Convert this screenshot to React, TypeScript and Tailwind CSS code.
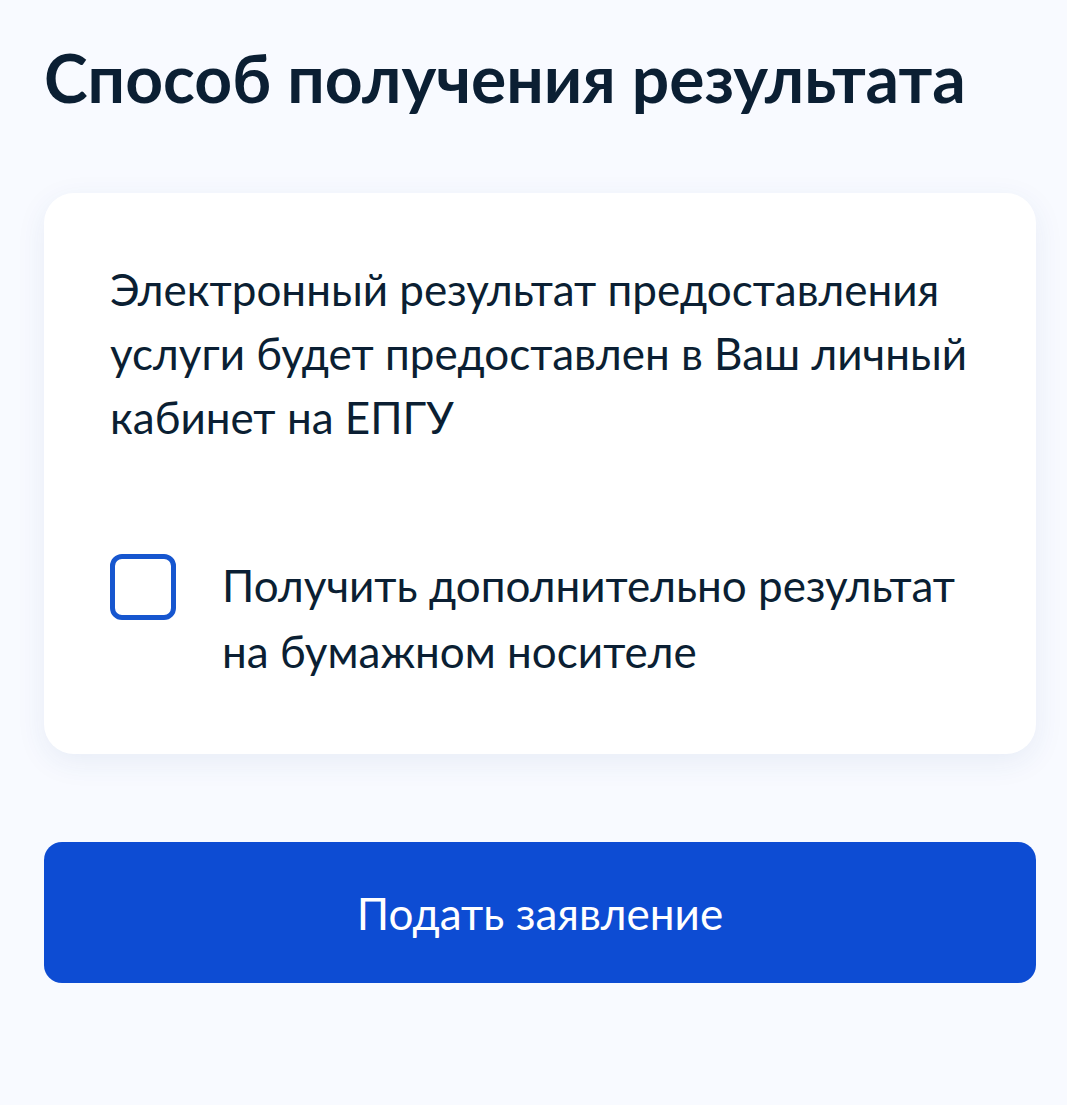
export default function App() {
  return (
    <div className="min-h-[1105px] w-full bg-[#f8faff] px-[44px] pt-[34px] text-[#0b1f33]" style={{ fontFamily: "Lato, 'Noto Sans', sans-serif" }}>
      <h1 className="text-[66px] font-bold leading-[88px]">Способ получения результата</h1>
      <div className="mt-[71px] w-[992px] rounded-[30px] bg-white px-[66px] pt-[64px] pb-[70px] shadow-[0_8px_30px_rgba(38,74,140,0.08)]">
        <p className="text-[44px] leading-[64px]">
          Электронный результат предоставления услуги будет предоставлен в Ваш личный кабинет на ЕПГУ
        </p>
        <label className="mt-[103px] flex items-start gap-[46px]">
          <span className="mt-[2px] h-[66px] w-[66px] shrink-0 rounded-[12px] border-[5px] border-[#1656cf] bg-white" />
          <span className="text-[44px] leading-[66px]">
            Получить дополнительно результат
            <br />
            на бумажном носителе
          </span>
        </label>
      </div>
      <button className="mt-[88px] flex h-[141px] w-[992px] items-center justify-center rounded-[18px] bg-[#0d4cd3] text-[44px] text-white">
        Подать заявление
      </button>
    </div>
  );
}
